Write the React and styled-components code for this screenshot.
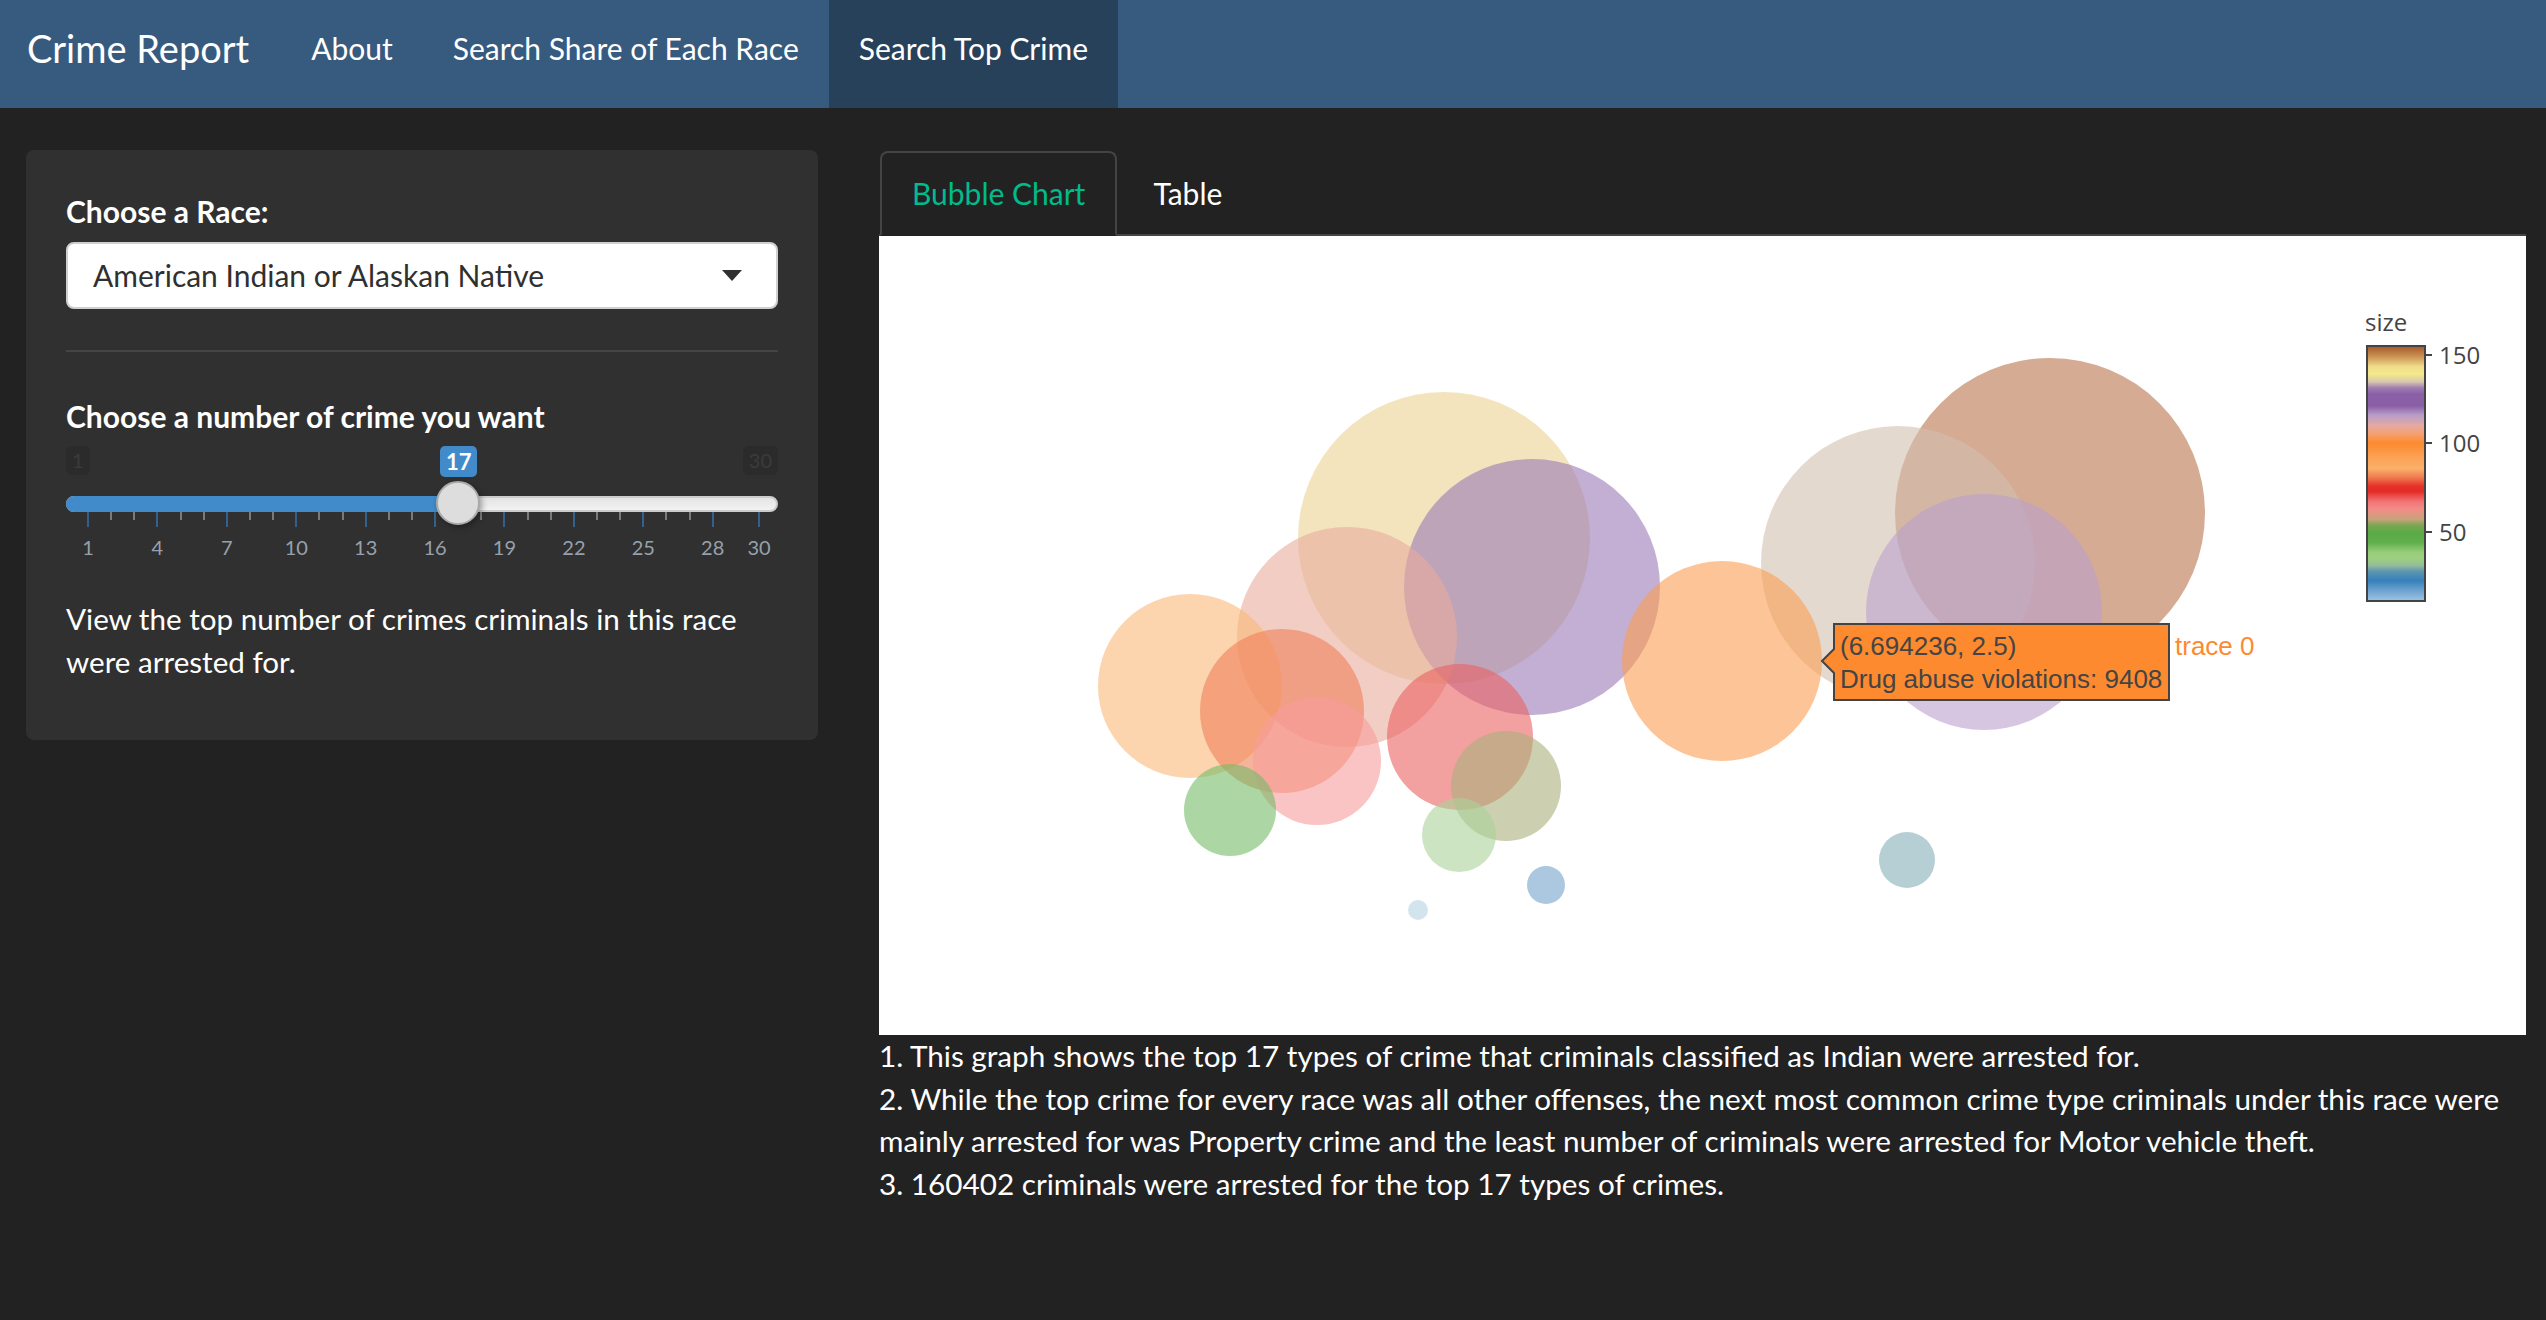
import React from "react";
import styled, { createGlobalStyle } from "styled-components";

const GlobalStyle = createGlobalStyle`
  html, body { margin: 0; padding: 0; }
  body {
    background: #222222;
    color: #ffffff;
    font-family: Lato, "Open Sans", "Liberation Sans", sans-serif;
    font-size: 30px;
    line-height: 1.42857;
    min-height: 1320px;
  }
  * { box-sizing: border-box; }
`;

const NavBar = styled.nav`
  display: flex;
  align-items: stretch;
  height: 108px;
  background: #375a7f;
`;

const Brand = styled.div`
  display: flex;
  align-items: center;
  padding: 0 32px 12px 27px;
  font-size: 38px;
  color: #ffffff;
  white-space: nowrap;
`;

const NavLink = styled.div`
  display: flex;
  align-items: center;
  padding: 0 30px 12px;
  font-size: 30px;
  color: #ffffff;
  white-space: nowrap;
  background: ${(p) => (p.$active ? "#28415b" : "transparent")};
`;

const Page = styled.div`
  display: flex;
  align-items: flex-start;
  padding: 42px 20px 0 26px;
`;

const Well = styled.div`
  flex: 0 0 792px;
  background: #303030;
  border-radius: 8px;
  padding: 40px 40px 57px;
`;

const Label = styled.div`
  font-weight: 700;
  font-size: 30px;
  line-height: 43px;
  color: #ffffff;
`;

const Select = styled.div`
  display: flex;
  align-items: center;
  justify-content: space-between;
  height: 67px;
  margin-top: 9px;
  padding: 0 34px 0 25px;
  background: #ffffff;
  border: 2px solid #cfcfcf;
  border-radius: 8px;
  color: #303030;
  font-size: 30px;
`;

const Caret = styled.span`
  width: 0;
  height: 0;
  border-left: 10px solid transparent;
  border-right: 10px solid transparent;
  border-top: 11px solid #303030;
`;

const Rule = styled.hr`
  border: 0;
  border-top: 2px solid #464545;
  margin: 41px 0 43px;
`;

const SliderWrap = styled.div`
  position: relative;
  height: 120px;
  margin: 8px 0 31px;
`;

const EdgeBox = styled.div`
  position: absolute;
  top: 0;
  ${(p) => (p.$right ? "right: 0;" : "left: 0;")}
  height: 29px;
  padding: 0 6px;
  border-radius: 6px;
  background: #2b2b2b;
  color: #3b3b3b;
  font-size: 20px;
  line-height: 29px;
`;

const ValueBox = styled.div`
  position: absolute;
  top: 0;
  height: 31px;
  width: 37px;
  margin-left: -18px;
  border-radius: 5px;
  background: #428bca;
  color: #ffffff;
  font-size: 22px;
  font-weight: 700;
  line-height: 31px;
  text-align: center;
`;

const Track = styled.div`
  position: absolute;
  left: 0;
  right: 0;
  top: 50px;
  height: 16px;
  border: 2px solid #cccccc;
  border-radius: 16px;
  background: linear-gradient(#e4e4e4, #f2f2f2);
`;

const Fill = styled.div`
  position: absolute;
  left: 0;
  top: 50px;
  height: 16px;
  border-radius: 16px 0 0 16px;
  background: #428bca;
`;

const Handle = styled.div`
  position: absolute;
  top: 35px;
  width: 44px;
  height: 44px;
  margin-left: -22px;
  border-radius: 50%;
  border: 2px solid #aaaaaa;
  background: #dddddd;
  box-shadow: 2px 2px 6px rgba(0, 0, 0, 0.35);
`;

const Tick = styled.div`
  position: absolute;
  top: 66px;
  width: 2px;
  margin-left: -1px;
  height: ${(p) => (p.$major ? "15px" : "8px")};
  background: ${(p) => (p.$major ? "#36608a" : "#7a7a7a")};
`;

const TickLabel = styled.div`
  position: absolute;
  top: 88px;
  width: 40px;
  margin-left: -20px;
  text-align: center;
  font-size: 20px;
  line-height: 26px;
  color: #97a1ab;
`;

const Help = styled.p`
  margin: 0;
  font-size: 29.6px;
  line-height: 43px;
  color: #ffffff;
`;

const Main = styled.div`
  flex: 1;
  margin: 1px 0 0 61px;
`;

const Tabs = styled.div`
  display: flex;
  border-bottom: 2px solid #444444;
`;

const Tab = styled.div`
  display: flex;
  align-items: center;
  height: 85px;
  margin: 0 4px -2px ${(p) => (p.$active ? "1px" : "0")};
  padding: 0 30px;
  border: 2px solid ${(p) => (p.$active ? "#444444" : "transparent")};
  border-bottom-color: ${(p) => (p.$active ? "#222222" : "transparent")};
  border-radius: 8px 8px 0 0;
  background: ${(p) => (p.$active ? "#222222" : "transparent")};
  color: ${(p) => (p.$active ? "#00bc8c" : "#ffffff")};
  font-size: 30px;
`;

const ChartBox = styled.div`
  background: #ffffff;
  height: 799px;
`;

const ChartSvg = styled.svg`
  display: block;
  width: 100%;
  height: 100%;
`;

const Notes = styled.div`
  font-size: 29.7px;
  line-height: 42.6px;
  color: #ffffff;
`;

const bubbles = [
  { cx: 1171, cy: 277, r: 155, c: "rgb(185,115,77)" },
  { cx: 1019, cy: 327, r: 137, c: "rgb(210,192,175)" },
  { cx: 565, cy: 302, r: 146, c: "rgb(235,210,145)" },
  { cx: 653, cy: 351, r: 128, c: "rgb(155,122,182)" },
  { cx: 1105, cy: 376, r: 118, c: "rgb(187,160,205)" },
  { cx: 468, cy: 401, r: 110, c: "rgb(233,172,157)" },
  { cx: 843, cy: 425, r: 100, c: "rgb(252,158,82)" },
  { cx: 311, cy: 450, r: 92, c: "rgb(250,185,120)" },
  { cx: 403, cy: 475, r: 82, c: "rgb(240,128,90)" },
  { cx: 581, cy: 501, r: 73, c: "rgb(233,97,97)" },
  { cx: 438, cy: 525, r: 64, c: "rgb(248,157,157)" },
  { cx: 627, cy: 550, r: 55, c: "rgb(170,177,123)" },
  { cx: 351, cy: 574, r: 46, c: "rgb(117,187,103)" },
  { cx: 580, cy: 599, r: 37, c: "rgb(170,210,153)" },
  { cx: 1028, cy: 624, r: 28, c: "rgb(133,175,183)" },
  { cx: 667, cy: 649, r: 19, c: "rgb(115,163,203)" },
  { cx: 539, cy: 674, r: 10, c: "rgb(180,212,228)" },
];

const stops = [
  [0, "#a6592b"], [0.04, "#c98f52"], [0.08, "#efdc8a"], [0.11, "#f5e98a"],
  [0.14, "#d8c8ae"], [0.165, "#9e7bb0"], [0.19, "#8a5fa6"], [0.235, "#8a5fa6"],
  [0.27, "#b79cc8"], [0.31, "#e2aaa4"], [0.345, "#f6a070"], [0.38, "#fd8a2f"],
  [0.44, "#fca257"], [0.48, "#fbb06a"], [0.515, "#f07c50"], [0.55, "#e3312a"],
  [0.57, "#e52a26"], [0.61, "#f17575"], [0.64, "#f48c88"], [0.68, "#c5a37a"],
  [0.705, "#76a64f"], [0.735, "#5aab48"], [0.77, "#5fb04d"], [0.81, "#98cd7a"],
  [0.835, "#9ecf82"], [0.86, "#94bd9a"], [0.885, "#5c94b0"], [0.92, "#3680bb"],
  [0.96, "#6ea4d1"], [1, "#9ec4e2"],
];

function BubbleChart() {
  return (
    <ChartSvg viewBox="0 0 1647 799" preserveAspectRatio="none">
      <defs>
        <linearGradient id="cbar" x1="0" y1="0" x2="0" y2="1">
          {stops.map(([o, c]) => (
            <stop key={o} offset={o} stopColor={c} />
          ))}
        </linearGradient>
      </defs>
      {bubbles.map((b, i) => (
        <circle key={i} cx={b.cx} cy={b.cy} r={b.r} fill={b.c} fillOpacity="0.6" />
      ))}
      <path
        d="M955 388 H1290 V464 H955 V437 L943 425 L955 413 Z"
        fill="#fd8a2f"
        stroke="#444444"
        strokeWidth="2"
      />
      <g fontFamily="'Liberation Sans', Arial, sans-serif" fontSize="26">
        <text x="961" y="419" fill="#444444">(6.694236, 2.5)</text>
        <text x="961" y="452" fill="#444444">Drug abuse violations: 9408</text>
        <text x="1296" y="419" fill="#fd8a2f">trace 0</text>
      </g>
      <rect x="1488" y="110" width="58" height="255" fill="url(#cbar)" stroke="#444444" strokeWidth="2" />
      <g fontFamily="'Open Sans', 'DejaVu Sans', sans-serif" fontSize="24" fill="#444444">
        <text x="1486" y="95">size</text>
        <text x="1560" y="128">150</text>
        <text x="1560" y="216">100</text>
        <text x="1560" y="305">50</text>
      </g>
      <g stroke="#444444" strokeWidth="2">
        <line x1="1546" y1="119" x2="1553" y2="119" />
        <line x1="1546" y1="207" x2="1553" y2="207" />
        <line x1="1546" y1="296" x2="1553" y2="296" />
      </g>
    </ChartSvg>
  );
}

const MIN = 1;
const MAX = 30;
const VALUE = 17;
const START = 22;
const SPAN = 671;
const pos = (v) => START + ((v - MIN) / (MAX - MIN)) * SPAN;
const majors = [1, 4, 7, 10, 13, 16, 19, 22, 25, 28, 30];
const minors = [];
for (let v = 1; v < 28; v++) if ((v - 1) % 3 !== 0) minors.push(v);

function RangeSlider() {
  const hx = pos(VALUE);
  return (
    <SliderWrap>
      <EdgeBox>1</EdgeBox>
      <EdgeBox $right>30</EdgeBox>
      <ValueBox style={{ left: hx }}>{VALUE}</ValueBox>
      <Track />
      <Fill style={{ width: hx }} />
      {minors.map((v) => (
        <Tick key={"m" + v} style={{ left: pos(v) }} />
      ))}
      {majors.map((v) => (
        <Tick key={"M" + v} $major style={{ left: pos(v) }} />
      ))}
      {majors.map((v) => (
        <TickLabel key={"L" + v} style={{ left: pos(v) }}>{v}</TickLabel>
      ))}
      <Handle style={{ left: hx }} />
    </SliderWrap>
  );
}

export default function App() {
  return (
    <>
      <GlobalStyle />
      <NavBar>
        <Brand>Crime Report</Brand>
        <NavLink>About</NavLink>
        <NavLink>Search Share of Each Race</NavLink>
        <NavLink $active>Search Top Crime</NavLink>
      </NavBar>
      <Page>
        <Well>
          <Label>Choose a Race:</Label>
          <Select>
            <span>American Indian or Alaskan Native</span>
            <Caret />
          </Select>
          <Rule />
          <Label>Choose a number of crime you want</Label>
          <RangeSlider />
          <Help>View the top number of crimes criminals in this race were arrested for.</Help>
        </Well>
        <Main>
          <Tabs>
            <Tab $active>Bubble Chart</Tab>
            <Tab>Table</Tab>
          </Tabs>
          <ChartBox>
            <BubbleChart />
          </ChartBox>
          <Notes>
            1. This graph shows the top 17 types of crime that criminals classified as Indian were arrested for.
            <br />
            2. While the top crime for every race was all other offenses, the next most common crime type criminals under this race were mainly arrested for was Property crime and the least number of criminals were arrested for Motor vehicle theft.
            <br />
            3. 160402 criminals were arrested for the top 17 types of crimes.
          </Notes>
        </Main>
      </Page>
    </>
  );
}
